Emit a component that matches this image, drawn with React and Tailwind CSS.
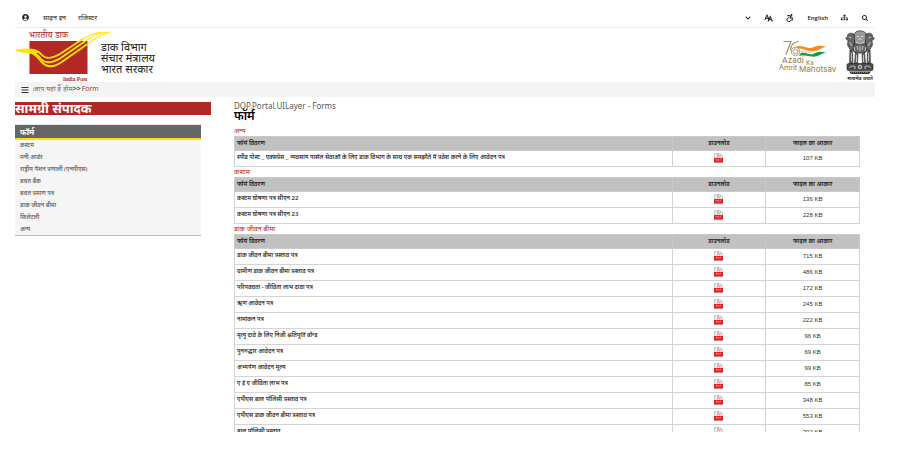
import {
  FaBars,
  FaChevronDown,
  FaSearch,
  FaSitemap,
  FaUserCircle,
} from "react-icons/fa";

const menu = [
  "कस्टम",
  "मनी आर्डर",
  "राष्ट्रीय पेंशन प्रणाली (एनपीएस)",
  "बचत बैंक",
  "बचत प्रमाण पत्र",
  "डाक जीवन बीमा",
  "फ़िलेटली",
  "अन्य",
];

const sections = [
  {
    title: "अन्य",
    rows: [
      [
        "स्पीड पोस्ट _ एक्सप्रेस _ व्यवसाय पार्सल सेवाओं के लिए डाक विभाग के साथ एक समझौते में प्रवेश करने के लिए आवेदन पत्र",
        "107 KB",
      ],
    ],
  },
  {
    title: "कस्टम",
    rows: [
      ["कस्टम घोषणा पत्र सीएन 22", "136 KB"],
      ["कस्टम घोषणा पत्र सीएन 23", "228 KB"],
    ],
  },
  {
    title: "डाक जीवन बीमा",
    rows: [
      ["डाक जीवन बीमा प्रस्ताव पत्र", "715 KB"],
      ["ग्रामीण डाक जीवन बीमा प्रस्ताव पत्र", "486 KB"],
      ["परिपक्वता - जीविता लाभ दावा पत्र", "172 KB"],
      ["ऋण आवेदन पत्र", "245 KB"],
      ["नामांकन पत्र", "222 KB"],
      ["मृत्यु दावे के लिए निजी क्षतिपूर्ति बॉन्ड", "96 KB"],
      ["पुनरुद्धार आवेदन पत्र", "69 KB"],
      ["अभ्यर्पण आवेदन मूल्य", "99 KB"],
      ["ए ई ए जीविता लाभ पत्र", "85 KB"],
      ["एपीएस बाल पॉलिसी प्रस्ताव पत्र", "348 KB"],
      ["एपीएस डाक जीवन बीमा प्रस्ताव पत्र", "553 KB"],
      ["बाल पॉलिसी प्रस्ताव", "302 KB"],
    ],
  },
];

function IndiaPostLogo() {
  return (
    <svg viewBox="15 28 97 54" className="h-[54px] w-[97px]" role="img" aria-label="India Post">
      <text x="29" y="38" fontSize="9" fill="#b22825" fontFamily="'Noto Serif Devanagari', 'Liberation Serif', serif">
        भारतीय डाक
      </text>
      <rect x="29.5" y="41" width="58" height="33" fill="#b22825" />
      <g fill="none" stroke="#ffe400" strokeLinecap="round">
        <path d="M17 50.500C32 48 38 50 42 55C46 59.500 52 58.500 60 54L82 39.500" strokeWidth="1.800" />
        <path d="M22 51.300C33 51 37 54 41 59C45 63.500 52 63 60 58.500L84 42" strokeWidth="1.800" />
        <path d="M28 52.300C35 53 38 58 42 62.500C47 67.500 54 67 61 62.500L86 45" strokeWidth="1.800" />
        <path d="M82 39.500C88 36 95 32.500 102 32" strokeWidth="1.100" />
        <path d="M84 42C91 37 98 33 106 32" strokeWidth="1.100" />
        <path d="M86 45C94 39 102 33.500 110 32" strokeWidth="1.100" />
      </g>
      <path d="M15.500 50.800C25 48 34 48.500 39 53C32 52.500 24 54 15.500 50.800Z" fill="#ffe400" />
      <text x="63" y="81" fontSize="6" fill="#b22825" stroke="#b22825" strokeWidth="0.200" fontFamily="'Liberation Serif', serif">
        India Post
      </text>
    </svg>
  );
}

function AzadiLogo() {
  return (
    <svg viewBox="779 35 60 36" className="h-9 w-[60px]" role="img" aria-label="Azadi Ka Amrit Mahotsav">
      <g fill="none" stroke="#a08c62" strokeWidth="1.100">
        <path d="M783.500 39.500H791L786 52.500M799 39.500C793 40 790.500 44 790.500 48.500" />
        <circle cx="795.500" cy="49.500" r="4.200" stroke="#b9a983" />
        <circle cx="795.500" cy="49.500" r="2.300" strokeWidth="1.600" strokeDasharray="0.600 0.600" stroke="#8b8272" />
      </g>
      <path d="M796 44.500C803 42 808 48.500 814 45C818 43 822 43.500 826 44.500C821 45.500 818 50 811 49.200C806 48.500 802 46 798 46.500Z" fill="#f58a1f" />
      <path d="M801 48C806 48.500 809 50.500 814 50C810 51.500 805 51 801 50Z" fill="#ddd" />
      <path d="M801 51C807 50 810 54.500 815 51C819 49 822 49.500 826 50.500C821 51.500 818 55.500 811 54.500C806 53.700 803 53 799 54Z" fill="#169b48" />
      <g fill="#a08c62" fontFamily="Inter, sans-serif" fontWeight="500">
        <text x="782" y="61" fontSize="8">Azadi</text>
        <text x="806" y="63" fontSize="6">Ka</text>
        <text x="779" y="68" fontSize="7">Amrit</text>
        <text x="799" y="70" fontSize="8">Mahotsav</text>
      </g>
    </svg>
  );
}

function Emblem() {
  return (
    <svg viewBox="845 29 30 53" className="h-[53px] w-[30px]" role="img" aria-label="सत्यमेव जयते">
      <g fill="#666" stroke="#222" strokeWidth="0.600">
        <path d="M855 33C856 30 864 30 865.500 33L867 38L865 46H855L853.500 38Z" fill="#999" />
        <path d="M854 34C850 32 847 34 847.500 36.500L845.500 38.500L848 40.500L847.500 45L851 51H855L854.500 40Z" />
        <path d="M866 34C870 32 873 34 872.500 36.500L874.500 38.500L872 40.500L872.500 45L869 51H865L865.500 40Z" />
        <path d="M854 44H866L867 51C864 54 856 54 853 51Z" />
        <path d="M850 50L852.500 52L853 64H849.500ZM855.500 52L858 54L857.500 64H854.500ZM862 54L864.500 52L865.500 64H862.500ZM867.500 52L870 50L870.500 64H867Z" />
      </g>
      <g stroke="#eee" strokeWidth="0.700" fill="none">
        <path d="M856.500 36.500H859M861 36.500H863.500M858 40L860 38.500L862 40M856 42L860 44L864 42M849 37L851.500 38M868.500 38L871 37M849.500 42L852 46M870.500 42L868 46M857 46L858 50M860 46V51M863 46L862 50M854 47L855 51M866 47L865 51M851.500 53V61M856.500 55V62M863.500 55V62M868.500 53V61" />
      </g>
      <rect x="847" y="63.500" width="26" height="7" rx="1.500" fill="#4a4a4a" stroke="#222" strokeWidth="0.600" />
      <circle cx="860" cy="67" r="3" fill="#eee" stroke="#222" strokeWidth="0.800" />
      <path d="M857 67H863M860 64V70M858 65L862 69M862 65L858 69" stroke="#333" strokeWidth="0.500" />
      <path d="M849.500 68C850 65.500 853 66 855 66.500V69M870.500 68C870 65.500 867 66 865 66.500V69" stroke="#ddd" strokeWidth="0.900" fill="none" />
      <path d="M849 71.500H871L869 74H851Z" fill="#333" />
      <path d="M851 72.700H869" stroke="#ccc" strokeWidth="0.600" strokeDasharray="1 1" />
      <text x="860" y="80" textAnchor="middle" fontSize="5" fontWeight="600" fill="#222" fontFamily="'Noto Sans', sans-serif">
        सत्यमेव जयते
      </text>
    </svg>
  );
}

function PdfIcon() {
  return (
    <svg viewBox="0 0 9 10" className="h-[10px] w-[9px]" aria-hidden="true">
      <path d="M0.500 0.500H6L8.500 2.500V9.500H0.500Z" fill="#ececec" stroke="#bdbdbd" strokeWidth="0.700" />
      <path d="M6 0.500V2.500H8.500" fill="#ddd" stroke="#bbb" strokeWidth="0.500" />
      <path d="M2.500 4.500C4 3.500 4.500 2 4 1.200C3.500 2.500 5 4 6.500 4" fill="none" stroke="#e9656b" strokeWidth="0.700" />
      <rect y="5" width="9" height="4.500" fill="#e32028" />
      <path d="M2 8V6H3V7H2M4 6V8C5.200 8 5.200 6 4 6M6 8V6H7.200M6 7H7" fill="none" stroke="#f7a5a8" strokeWidth="0.400" />
    </svg>
  );
}

function FormTable({ section }) {
  return (
    <section>
      <h3 className="h-[10px] text-[7px] leading-[10px] text-[#b22825]">{section.title}</h3>
      <table className="w-full table-fixed border-collapse text-[6px] leading-[10px]" aria-label={section.title}>
        <colgroup>
          <col className="w-[70%]" />
          <col className="w-[15%]" />
          <col className="w-[15%]" />
        </colgroup>
        <thead>
          <tr className="h-[14px] bg-[#c1c1c1] text-[#222]">
            <th className="border border-[#c9c9c9] px-[2px] pt-0 pb-px text-left font-semibold">फॉर्म विवरण</th>
            <th className="border border-[#c9c9c9] px-0 pt-0 pb-px text-center font-semibold">डाउनलोड</th>
            <th className="border border-[#c9c9c9] px-0 pt-0 pb-px text-center font-semibold">फाइल का आकार</th>
          </tr>
        </thead>
        <tbody>
          {section.rows.map(([name, size]) => (
            <tr key={name} className="h-4">
              <td className="border border-[#d4d4d4] px-[2px] pt-0 pb-[3px] font-medium whitespace-nowrap text-[#111]">{name}</td>
              <td className="border border-[#d4d4d4] px-0 pt-0 pb-px">
                <a href="#download" aria-label={`${name} PDF`} className="flex justify-center">
                  <PdfIcon />
                </a>
              </td>
              <td className="border border-[#d4d4d4] px-0 pt-0 pb-px text-center font-['Liberation_Sans',sans-serif] text-[#333]">{size}</td>
            </tr>
          ))}
        </tbody>
      </table>
    </section>
  );
}

export default function App() {
  return (
    <div className="h-screen bg-white pb-[30px] font-['Noto_Sans','Noto_Sans_Devanagari',sans-serif]">
      <div className="h-full overflow-hidden pr-[34px] pl-[15px]">
        <nav className="flex h-7 items-center justify-between border-b border-[#ebebeb] pt-2 text-[7px] leading-[10px] text-[#222]">
          <div className="flex items-center gap-3 pl-[7px]">
            <FaUserCircle className="mr-[2px] size-[7px]" />
            <a href="#signin">साइन इन</a>
            <a href="#register">रजिस्टर</a>
          </div>
          <div className="flex items-center gap-[13px] pr-[6px]">
            <button type="button" aria-label="अधिक"><FaChevronDown className="size-[6px]" /></button>
            <button type="button" aria-label="अक्षर आकार">
              <svg viewBox="0 0 9 8" className="h-2 w-[9px]" fill="none" stroke="#222">
                <path d="M0.800 6L3 0.800L5 6M1.500 4.300H4.500" strokeWidth="1" />
                <path d="M4 7.500L6.200 2.500L8.400 7.500M4.800 5.800H7.600" strokeWidth="1.100" />
              </svg>
            </button>
            <button type="button" aria-label="सुगम्यता">
              <svg viewBox="0 0 8 8" className="size-2" fill="none" stroke="#222" strokeLinecap="round" strokeLinejoin="round">
                <circle cx="5.500" cy="1" r="0.900" fill="#222" stroke="none" />
                <path d="M1.500 1.800L3.300 1.500L5 2.500L4 4H6.500L6 6.300" strokeWidth="1.100" />
                <path d="M2.500 3.800A2 2 0 1 0 4.800 6.300" strokeWidth="1" />
              </svg>
            </button>
            <button type="button" className="font-['Open_Sans',sans-serif] text-[6px] font-semibold">English</button>
            <button type="button" aria-label="साइटमैप"><FaSitemap className="size-[7px]" /></button>
            <button type="button" aria-label="खोजें"><FaSearch className="mx-px size-[6px]" /></button>
          </div>
        </nav>

        <header className="flex h-[54px] items-center justify-between">
          <div className="flex items-center">
            <IndiaPostLogo />
            <div className="-ml-[11px] pt-[5px] text-[11px] leading-[11px] text-[#222]">
              <p>डाक विभाग</p>
              <p>संचार मंत्रालय</p>
              <p>भारत सरकार</p>
            </div>
          </div>
          <div className="flex items-center gap-[6px]">
            <AzadiLogo />
            <Emblem />
          </div>
        </header>

        <div className="flex h-[15px] items-center bg-[#f4f4f4] pl-[6px] text-[7px] text-[#666]">
          <button type="button" aria-label="मेनू" className="mr-1 text-[#333]"><FaBars className="size-2" /></button>
          <a href="#home">आप यहां हैं होम</a>
          <span className="text-[#222]">&gt;&gt;</span>
          <a href="#form" className="ml-px font-['Open_Sans',sans-serif] text-[#b22825]">Form</a>
        </div>

        <div className="flex gap-[23px] pt-[5px]">
          <aside className="w-[196px] shrink-0">
            <h2 className="h-[13px] bg-[#b22825] text-[13px] leading-[12px] font-bold text-white">सामग्री संपादक</h2>
            <div className="mt-[9px] w-[186px] border-t border-b border-t-[#e8e8e8] border-b-[#bbb] bg-[#f5f5f5]">
              <h3 className="h-[15px] border-b-2 border-[#ffe100] bg-[#656565] pl-[5px] text-[8px] leading-[13px] font-bold text-white">फॉर्म</h3>
              <ul className="-mt-px pl-[5px] text-[6px] leading-3 font-medium text-[#555]">
                {menu.map((item) => (
                  <li key={item} className="h-3"><a href="#menu">{item}</a></li>
                ))}
              </ul>
            </div>
          </aside>

          <main className="min-w-0 flex-1 pr-[15px]">
            <p className="h-2 text-[8px] leading-[7px] text-[#555]">DOP.Portal.UILayer - Forms</p>
            <h1 className="mb-[5px] h-[11px] text-[12px] leading-[11px] font-semibold text-black">फॉर्म</h1>
            {sections.map((section) => (
              <FormTable key={section.title} section={section} />
            ))}
          </main>
        </div>
      </div>
    </div>
  );
}
